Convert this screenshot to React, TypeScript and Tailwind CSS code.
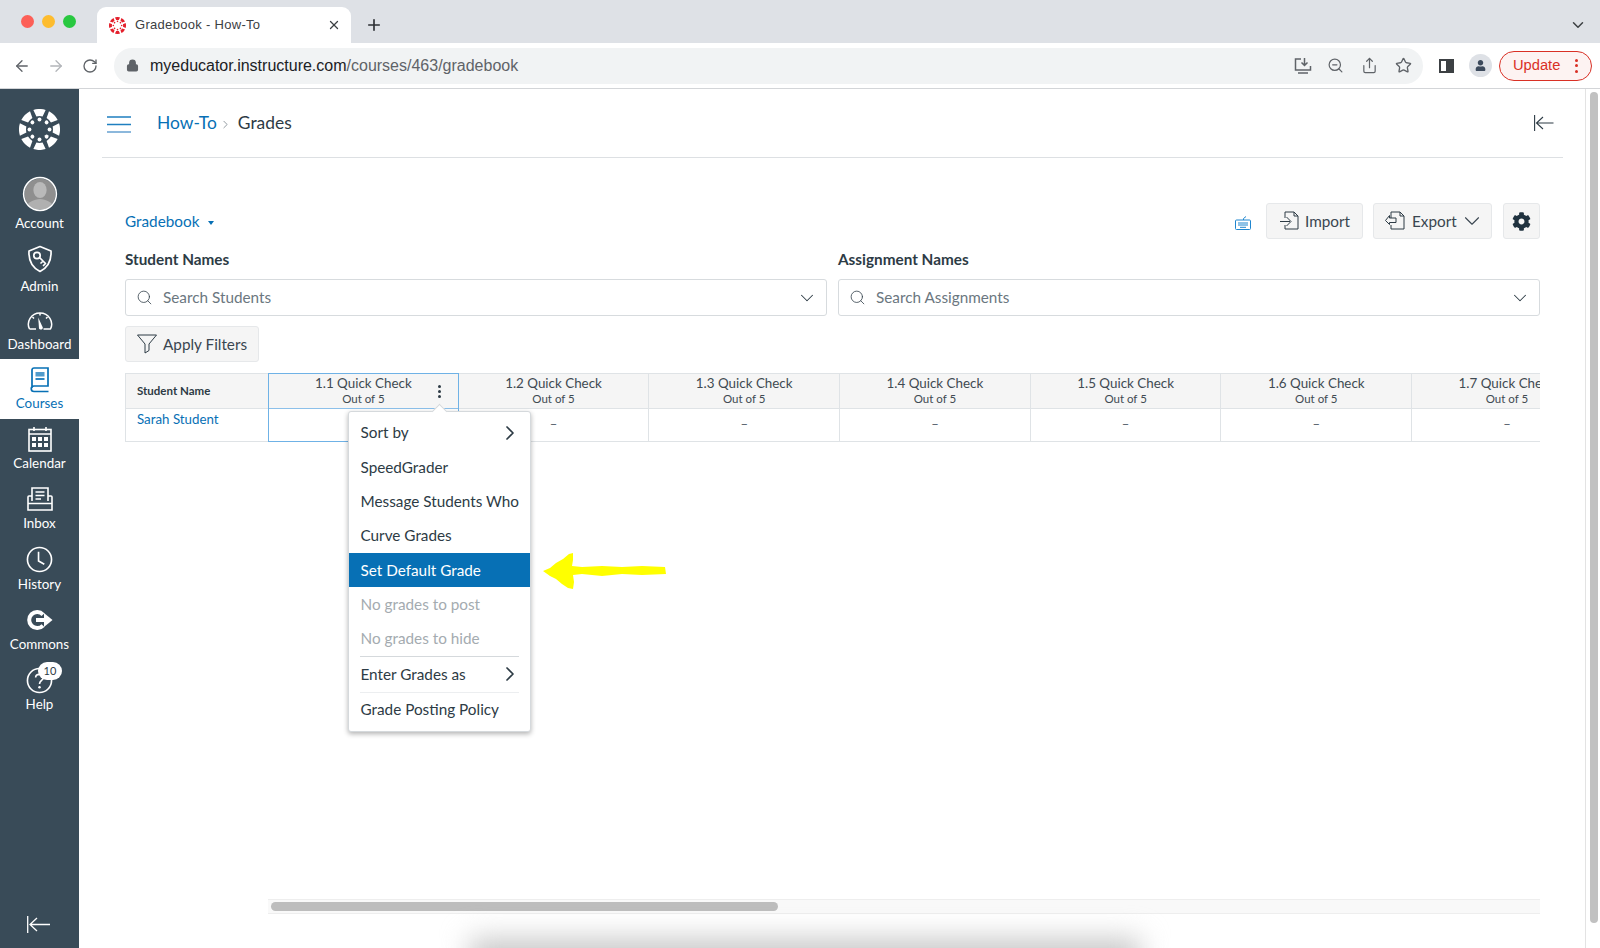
import React from "react";
import { ArrowLeft, ArrowRight, RotateCw, Lock, ZoomOut, Share, Star, Search, ChevronDown, ChevronRight, X, Plus } from "lucide-react";
import { FaCog, FaUser } from "react-icons/fa";

function CanvasLogo({ size, color }: { size: number; color: string }) {
  const wedges = [0, 45, 90, 135, 180, 225, 270, 315];
  return (
    <svg width={size} height={size} viewBox="0 0 40 40">
      {wedges.map((a) => (
        <g key={a} transform={`rotate(${a} 20 20)`}>
          <path d="M14 0.900 A20 20 0 0 1 26 0.900 L23 7.200 A13.200 13.200 0 0 0 17 7.200 Z" fill={color} />
          <circle cx="20" cy="10.200" r="1.900" fill={color} />
        </g>
      ))}
    </svg>
  );
}

function NavIcon({ name }: { name: string }) {
  const c = "currentColor";
  if (name === "Account")
    return (
      <svg width="36" height="36" viewBox="0 0 36 36">
        <defs>
          <clipPath id="av"><circle cx="18" cy="18" r="15.500" /></clipPath>
        </defs>
        <circle cx="18" cy="18" r="15.500" fill="#8f8f8f" />
        <g clipPath="url(#av)">
          <ellipse cx="18" cy="14" rx="6.600" ry="8" fill="#b9b9b9" />
          <path d="M3 36 C4 25 12 24 18 23 C24 24 32 25 33 36 Z" fill="#b0b0b0" />
        </g>
        <circle cx="18" cy="18" r="16.400" fill="none" stroke="#fff" strokeWidth="1.500" />
      </svg>
    );
  if (name === "Admin")
    return (
      <svg width="26" height="28" viewBox="0 0 26 28" fill="none" stroke={c} strokeWidth="1.700">
        <path d="M13 1.500 L24 6 C24.500 15 22 22 13 26.500 C4 22 1.500 15 2 6 Z" strokeLinejoin="round" />
        <circle cx="10" cy="10.500" r="3.200" />
        <path d="M12.500 12.500 L18.500 18.500 M16 16 L14 18 M18.500 18.500 L16.500 20.500" strokeLinecap="round" />
      </svg>
    );
  if (name === "Dashboard")
    return (
      <svg width="28" height="20" viewBox="0 0 28 20" fill="none" stroke={c} strokeWidth="1.500">
        <path d="M3.500 18 C0 11 5 2 14 2 C23 2 28 11 24.500 18 H17.500 M10 18 H3.500" strokeLinejoin="round" />
        <path d="M12.200 6.500 L16.800 16.500 C17.300 18.500 14 19.500 13 17.500 Z" fill={c} stroke="none" />
        <path d="M14 2 V4.500 M6.500 6 L8 7.500 M21.500 6 L20 7.500" />
      </svg>
    );
  if (name === "Courses")
    return (
      <svg width="20" height="26" viewBox="0 0 20 26" fill="none" stroke={c} strokeWidth="1.700">
        <path d="M2 21 V3 A2 2 0 0 1 4 1 H18 V19 H4 A2.500 2.500 0 0 0 4 24.500 H18.500" />
        <rect x="5.500" y="5" width="9" height="4.500" fill={c} stroke="none" opacity="0.7" />
        <path d="M5.500 12 H14.500" />
      </svg>
    );
  if (name === "Calendar")
    return (
      <svg width="24" height="26" viewBox="0 0 24 26" fill="none" stroke={c} strokeWidth="1.600">
        <rect x="1" y="3.500" width="22" height="21.500" />
        <path d="M1 8 H23 M6 1 V5 M18 1 V5" />
        <g fill={c} stroke="none">
          <rect x="4" y="11" width="4" height="4" /><rect x="10" y="11" width="4" height="4" /><rect x="16" y="11" width="4" height="4" />
          <rect x="4" y="17" width="4" height="4" /><rect x="10" y="17" width="4" height="4" /><rect x="16" y="17" width="4" height="4" />
        </g>
      </svg>
    );
  if (name === "Inbox")
    return (
      <svg width="26" height="24" viewBox="0 0 26 24" fill="none" stroke={c} strokeWidth="1.600">
        <path d="M5 14 V1 H21 V14" />
        <path d="M8.500 5 H17.500 M8.500 8.500 H17.500 M8.500 12 H14" />
        <path d="M5 9 H2 A1 1 0 0 0 1 10 V23 H25 V10 A1 1 0 0 0 24 9 H21 M1 16.500 H25" />
      </svg>
    );
  if (name === "History")
    return (
      <svg width="27" height="27" viewBox="0 0 28 28" fill="none" stroke={c} strokeWidth="1.700">
        <circle cx="14" cy="14" r="12.500" />
        <path d="M13 6 V15.500 L19 19" />
      </svg>
    );
  if (name === "Commons")
    return (
      <svg width="26" height="20" viewBox="0 0 26 20" fill="none">
        <path d="M16 4.500 A8 8 0 1 0 16 15.500" stroke={c} strokeWidth="4" />
        <path d="M9 10 H18" stroke={c} strokeWidth="4" />
        <path d="M17 3 L25.500 10 L17 17 Z" fill={c} />
      </svg>
    );
  return (
    <svg width="27" height="27" viewBox="0 0 28 28" fill="none" stroke={c} strokeWidth="1.700">
      <circle cx="14" cy="14" r="12.500" />
      <path d="M10 11 C10 6.500 18 6.500 18 11 C18 14 14 14 14 17.500" />
      <circle cx="14" cy="21" r="1.300" fill={c} stroke="none" />
    </svg>
  );
}

function CollapseIcon({ className }: { className: string }) {
  return (
    <svg className={className} width="20" height="16" viewBox="0 0 20 16" fill="none" stroke="currentColor" strokeWidth="1.100">
      <path d="M0.600 0 V16 M19.500 8 H3 M9 2 L2.500 8 L9 14" />
    </svg>
  );
}

const nav: [string, string, string][] = [
  ["Account", "h-[63px]", "-translate-y-[6px]"],
  ["Admin", "h-[58px]", "-translate-y-[4px]"],
  ["Dashboard", "h-[59px]", ""],
  ["Courses", "h-[60px]", ""],
  ["Calendar", "h-[60px]", "-translate-y-[1px]"],
  ["Inbox", "h-[61px]", "-translate-y-[1px]"],
  ["History", "h-[60px]", "-translate-y-[2px]"],
  ["Commons", "h-[60px]", "-translate-y-[1px]"],
  ["Help", "h-[60px]", "-translate-y-[1px]"],
];

function Sidebar() {
  return (
    <aside className="w-[79px] shrink-0 bg-[#394b58] flex flex-col text-white">
      <div className="h-[90px] shrink-0 flex items-start justify-center pt-[20px]">
        <CanvasLogo size={41} color="#ffffff" />
      </div>
      {nav.map(([name, h, shift]) => {
        const active = name === "Courses";
        return (
          <div key={name} className={`${h} shrink-0 flex flex-col items-center ${active ? "bg-white text-[#0770b5]" : ""}`}>
            <div className={`relative h-[36px] mt-[3px] flex items-center justify-center ${shift}`}>
              <NavIcon name={name} />
              {name === "Help" && (
                <span className="absolute left-[12px] top-[0px] w-[24px] h-[18px] rounded-full bg-white text-[#2d3b45] text-[11px] leading-[18px] text-center">10</span>
              )}
            </div>
            <span className="text-[13.400px] leading-[20px] mt-[-5px]">{name}</span>
          </div>
        );
      })}
      <div className="mt-auto h-[32px] flex items-start pl-[27px]">
        <svg width="24" height="17" viewBox="0 0 24 17" fill="none" stroke="#fff" strokeWidth="1.300">
          <path d="M0.700 0 V17 M23 8.500 H4 M10 2 L3 8.500 L10 15" />
        </svg>
      </div>
    </aside>
  );
}

function Column({ n }: { n: number }) {
  return (
    <div className="w-[190.700px] shrink-0 border-r border-[#dfe3e6] flex flex-col">
      <div className="h-[36px] bg-[#f5f5f5] border-y border-[#dfe3e6] flex flex-col items-center text-[#3f4a52]">
        <span className="text-[13.400px] leading-[17px] mt-[1px] whitespace-nowrap">{`1.${n} Quick Check`}</span>
        <span className="text-[11.500px] leading-[14px] whitespace-nowrap">Out of 5</span>
      </div>
      <div className="h-[33px] border-b border-[#dfe3e6] flex items-center justify-center text-[13px] text-[#55606a]">–</div>
    </div>
  );
}

function Gradebook() {
  return (
    <div className="flex h-[69px] w-[1415px] overflow-hidden">
      <div className="w-[143px] shrink-0 border-l border-[#dfe3e6] flex flex-col">
        <div className="h-[36px] bg-[#f5f5f5] border-y border-[#dfe3e6] flex items-center pl-[11px] text-[11.500px] font-bold text-[#2d3b45]">Student Name</div>
        <div className="h-[33px] border-b border-[#dfe3e6] pl-[11px] text-[13.300px] leading-[20px] text-[#0770b5]">Sarah Student</div>
      </div>
      <div className="w-[190.700px] shrink-0 flex flex-col border border-[#6fb2e6] h-[69px]">
        <div className="h-[35px] bg-[#f5f5f5] border-b border-[#8cc0ea] flex flex-col items-center text-[#3f4a52] relative">
          <span className="text-[13.400px] leading-[17px] mt-[1px] whitespace-nowrap">1.1 Quick Check</span>
          <span className="text-[11.500px] leading-[14px] whitespace-nowrap">Out of 5</span>
          <span className="absolute right-[17px] top-[11px] flex flex-col gap-[2.500px]">
            <i className="block w-[2.500px] h-[2.500px] rounded-full bg-[#2d3b45]" />
            <i className="block w-[2.500px] h-[2.500px] rounded-full bg-[#2d3b45]" />
            <i className="block w-[2.500px] h-[2.500px] rounded-full bg-[#2d3b45]" />
          </span>
        </div>
      </div>
      {[2, 3, 4, 5, 6, 7].map((n) => (
        <Column key={n} n={n} />
      ))}
    </div>
  );
}

function MenuItem({ label, arrow, active, disabled }: { label: string; arrow?: boolean; active?: boolean; disabled?: boolean }) {
  return (
    <div className={`h-[34.400px] flex items-center justify-between pl-[11.500px] pr-[8px] text-[15.300px] whitespace-nowrap ${active ? "bg-[#0770b5] text-white" : disabled ? "text-[#a4abb0]" : "text-[#2d3b45]"}`}>
      <span>{label}</span>
      {arrow && <ChevronRight size={24} strokeWidth={1.700} />}
    </div>
  );
}

function Menu() {
  return (
    <div className="absolute left-[348px] top-[411px] w-[183px] h-[321px] bg-white rounded-[3px] border border-[#d5d9dc] shadow-[0_2px_5px_rgba(0,0,0,0.3)] pt-[3.400px]">
      <div className="absolute left-[85px] -top-[6px] w-[11px] h-[11px] rotate-45 bg-white border-l border-t border-[#d5d9dc]" />
      <div className="relative">
        <MenuItem label="Sort by" arrow />
        <MenuItem label="SpeedGrader" />
        <MenuItem label="Message Students Who" />
        <MenuItem label="Curve Grades" />
        <MenuItem label="Set Default Grade" active />
        <MenuItem label="No grades to post" disabled />
        <MenuItem label="No grades to hide" disabled />
        <div className="mx-[11px] h-[1px] bg-[#d5d9dc]" />
        <MenuItem label="Enter Grades as" arrow />
        <div className="mx-[11px] h-[1px] bg-[#eceef0]" />
        <MenuItem label="Grade Posting Policy" />
      </div>
    </div>
  );
}

function DocIcon({ out }: { out?: boolean }) {
  return (
    <svg width="20" height="20" viewBox="0 0 20 20" fill="none" stroke="#2d3b45" strokeWidth="1">
      {out ? (
        <path d="M6 7 V1 H15 L19 5 V18 H6 V14 M15 1 V5 H19 M11 7 H4.500 V4.500 L0.500 9.500 L4.500 13.500 V11.500 H11 Z" />
      ) : (
        <path d="M6 7 V1 H15 L19 5 V18 H6 V14 M15 1 V5 H19 M1 10.500 H11 M7.500 6 L12 10.500 L7.500 15" />
      )}
    </svg>
  );
}

const btn = "h-[36px] bg-[#f5f5f5] border border-[#e6e8ea] rounded-[3px] flex items-center text-[15.300px] text-[#3a4650]";

function Content() {
  return (
    <main className="flex-1 min-w-0 overflow-hidden bg-white">
      <header className="ml-[23px] mr-[22px] h-[69px] border-b border-[#dde0e3] flex items-center pl-[5px] pr-[9px]">
        <svg className="mt-[2px]" width="24" height="17" viewBox="0 0 24 17" stroke="#1f7fc0" strokeWidth="1.300">
          <path d="M0 1 H24 M0 8.500 H24" />
          <path d="M0 16 H24" stroke="#7fb0d8" strokeWidth="1.800" />
        </svg>
        <span className="ml-[26px] text-[17.400px] text-[#0770b5]">How-To</span>
        <ChevronRight size={13} strokeWidth={1.300} className="ml-[2px] mt-[2px] text-[#66727b]" />
        <span className="ml-[6px] text-[17.400px] text-[#2d3b45]">Grades</span>
        <CollapseIcon className="ml-auto text-[#2d3b45]" />
      </header>
      <div className="pl-[46px] pr-[45px] pt-[45px]">
        <div className="flex items-center h-[36px]">
          <span className="text-[15.300px] text-[#0770b5]">Gradebook</span>
          <span className="ml-[9px] mt-[3px] w-0 h-0 border-x-[3px] border-x-transparent border-t-[4px] border-t-[#0770b5]" />
          <svg className="ml-auto mr-[15px] mt-[3px]" width="16" height="14" viewBox="0 0 16 14" fill="none" stroke="#1f86cf" strokeWidth="1">
            <rect x="0.500" y="4" width="15" height="9.500" rx="1" />
            <path d="M8.500 4 V2.500 L11 0.500 M3 7 H13 M3 9 H13 M5 11.300 H11" />
          </svg>
          <div className={`${btn} w-[97px] pl-[12px]`}>
            <DocIcon /><span className="ml-[6px]">Import</span>
          </div>
          <div className={`${btn} w-[119px] ml-[10px] pl-[11px]`}>
            <DocIcon out /><span className="ml-[7px]">Export</span>
            <ChevronDown size={26} strokeWidth={1} className="ml-[2px]" />
          </div>
          <div className={`${btn} w-[37px] ml-[11px] justify-center`}>
            <FaCog size={19} color="#20323f" />
          </div>
        </div>
        <div className="grid grid-cols-2 gap-x-[11px] mt-[9px]">
          {[["Student Names", "Search Students"], ["Assignment Names", "Search Assignments"]].map(([l, p]) => (
            <div key={l}>
              <div className="h-[22px] leading-[22px] text-[15.300px] font-bold text-[#2d3b45]">{l}</div>
              <div className="mt-[9px] h-[37px] border border-[#d7dbde] rounded-[3px] flex items-center pl-[10px] pr-[8px]">
                <Search size={17} strokeWidth={1.100} className="text-[#2d3b45]" />
                <span className="ml-[10px] text-[15.300px] text-[#6b7780]">{p}</span>
                <ChevronDown size={22} strokeWidth={1.100} className="ml-auto text-[#2d3b45]" />
              </div>
            </div>
          ))}
        </div>
        <div className={`${btn} w-[134px] mt-[10px] pl-[11px]`}>
          <svg width="20" height="20" viewBox="0 0 20 20" fill="none" stroke="#2d3b45" strokeWidth="1">
            <path d="M0.500 1 H19.500 L12 10 V16.500 L8 19 V10 Z" strokeLinejoin="round" />
          </svg>
          <span className="ml-[6px]">Apply Filters</span>
        </div>
        <div className="mt-[11px]"><Gradebook /></div>
        <div className="mt-[457px] ml-[143px] h-[15px] bg-[#f9f9f9] border-y border-[#eeeeee] flex items-center pl-[3px]">
          <div className="w-[507px] h-[9px] rounded-full bg-[#bdbdbd]" />
        </div>
        <div className="ml-[345px] mt-[24px] w-[670px] h-[60px] bg-[#c9c9c9] blur-[14px]" />
      </div>
    </main>
  );
}

function Chrome() {
  return (
    <div className="shrink-0 font-['Liberation_Sans',sans-serif]">
      <div className="h-[43px] bg-[#dee1e6] flex items-end relative">
        <div className="flex gap-[8px] absolute left-[21px] top-[15px]">
          <i className="block w-[13px] h-[13px] rounded-full bg-[#fc5f57]" />
          <i className="block w-[13px] h-[13px] rounded-full bg-[#fdbc2e]" />
          <i className="block w-[13px] h-[13px] rounded-full bg-[#28c840]" />
        </div>
        <div className="ml-[97px] w-[254px] h-[36px] bg-white rounded-t-[9px] flex items-center pl-[12px] pr-[10px]">
          <CanvasLogo size={17} color="#e4202c" />
          <span className="ml-[9px] text-[13px] tracking-[0.300px] text-[#3c4043] whitespace-nowrap">Gradebook - How-To</span>
          <X size={14} strokeWidth={2.200} className="ml-auto text-[#3c4043]" />
        </div>
        <Plus size={18} strokeWidth={2.200} className="ml-[14px] mb-[9px] text-[#2c2f33]" />
        <ChevronDown size={18} strokeWidth={2} className="ml-auto mr-[13px] mb-[9px] text-[#3c4043]" />
      </div>
      <div className="h-[46px] bg-white border-b border-[#d3d5d8] flex items-center text-[#5f6368]">
        <ArrowLeft size={18} strokeWidth={1.700} className="ml-[13px]" />
        <ArrowRight size={18} strokeWidth={1.700} className="ml-[16px] text-[#b2b5b9]" />
        <RotateCw size={16} strokeWidth={2} className="ml-[17px]" />
        <div className="ml-[16px] w-[1309px] h-[36px] rounded-full bg-[#f1f3f4] flex items-center pl-[12px] pr-[11px]">
          <Lock size={13} strokeWidth={2.500} fill="#5f6368" />
          <span className="ml-[11px] text-[16px] whitespace-nowrap text-[#202124]">myeducator.instructure.com<span className="text-[#5f6368]">/courses/463/gradebook</span></span>
          <svg className="ml-auto" width="18" height="18" viewBox="0 0 18 18" fill="none" stroke="#5f6368" strokeWidth="1.500">
            <path d="M7 2 H1.500 V13 H16.500 V9 M10.500 1 V8 M7.500 5.500 L10.500 8.500 L13.500 5.500 M4 16 H14" />
          </svg>
          <ZoomOut size={17} strokeWidth={1.700} className="ml-[15px]" />
          <Share size={17} strokeWidth={1.700} className="ml-[17px]" />
          <Star size={17} strokeWidth={1.900} className="ml-[17px]" />
        </div>
        <div className="ml-[16px] w-[15px] h-[14px] border-2 border-[#3c4043] flex justify-end">
          <i className="block w-[6px] bg-[#3c4043]" />
        </div>
        <div className="ml-[15px] w-[23px] h-[23px] rounded-full bg-[#dee1e6] flex items-center justify-center">
          <FaUser size={11} color="#3c4a5c" />
        </div>
        <div className="ml-[7px] w-[93px] h-[30px] rounded-full border border-[#d93025] bg-[#fdf3f2] flex items-center pl-[13px] text-[14.700px] text-[#d93025]">
          Update
          <span className="ml-[15px] flex flex-col gap-[2.500px]">
            <i className="block w-[3px] h-[3px] rounded-full bg-[#d93025]" />
            <i className="block w-[3px] h-[3px] rounded-full bg-[#d93025]" />
            <i className="block w-[3px] h-[3px] rounded-full bg-[#d93025]" />
          </span>
        </div>
      </div>
    </div>
  );
}

export default function App() {
  return (
    <div className="relative w-[1600px] h-[948px] overflow-hidden bg-white flex flex-col font-['Lato','Noto_Sans',sans-serif]">
      <Chrome />
      <div className="flex-1 flex min-h-0">
        <Sidebar />
        <Content />
        <div className="w-[15px] shrink-0 border-l border-[#e3e3e3] pt-[3px] pl-[4px]">
          <div className="w-[8px] h-[831px] rounded-full bg-[#c1c1c1]" />
        </div>
      </div>
      <Menu />
      <svg className="absolute left-[542px] top-[552px]" width="126" height="38" viewBox="0 0 126 38" fill="#ffff00">
        <path d="M1 19 L8 16 L14 11 L21 7 L27 2 L31 1 L31 8 L30 14 L40 15 L60 14 L80 15 L100 14 L123 15 L124 22 L100 23 L80 22 L60 24 L40 22 L31 23 L32 30 L31 37 L26 36 L20 32 L14 27 L8 24 Z" />
      </svg>
    </div>
  );
}
